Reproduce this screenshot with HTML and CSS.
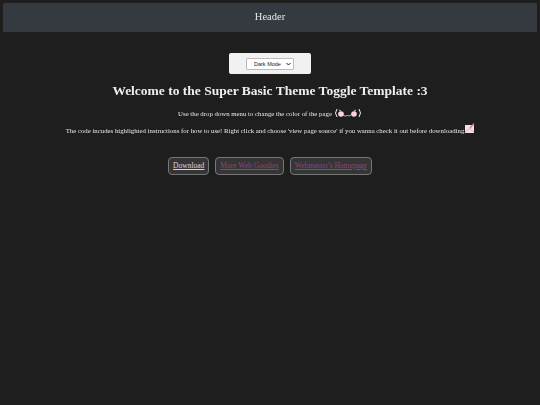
FILE: index.html
```html
<!DOCTYPE html>
<html>
<head>
<meta charset="UTF-8">
<title>Theme Toggle Template</title>
<link rel="stylesheet" href="styles.css">
</head>
<body>
<header class="site-header">Header</header>
<main class="content">
  <div class="theme-box">
    <select class="theme-select">
      <option>Dark Mode</option>
      <option>Light Mode</option>
    </select>
  </div>
  <h1>Welcome to the Super Basic Theme Toggle Template :3</h1>
  <p class="line-one">Use the drop down menu to change the color of the page
    <svg class="face" width="28" height="12" viewBox="0 0 28 12">
      <path d="M3 1 Q0 5 3 9 M25 1 Q28 5 25 9" fill="none" stroke="#eee" stroke-width="1"/>
      <path d="M9 7 Q11 9 13.5 7.5 Q16 9 18 6" fill="none" stroke="#ddd" stroke-width="0.8"/>
      <circle cx="7" cy="6" r="2.8" fill="#fbd5d8"/>
      <circle cx="20" cy="6" r="2.8" fill="#fbd5d8"/>
      <path d="M5 2 L7 3 M20 3 L22 2" stroke="#eee" stroke-width="0.8"/>
    </svg>
  </p>
  <p class="line-two">The code incudes highlighted instructions for how to use! Right click and choose 'view page source' if you wanna check it out before downloading
    <svg class="note" width="9" height="10" viewBox="0 0 9 10">
      <rect x="0" y="2" width="9" height="8" fill="#f6dfe2"/>
      <path d="M0 9 L4.5 5.5 L9 9" fill="none" stroke="#b9a0a4" stroke-width="0.7"/>
      <path d="M5 5 L9 0.5" stroke="#d9778a" stroke-width="1.3"/>
    </svg>
  </p>
  <nav class="button-row">
    <a class="btn btn-first" href="#">Download</a>
    <a class="btn" href="#">More Web Goodies</a>
    <a class="btn" href="#">Webmaster's Homepage</a>
  </nav>
</main>
</body>
</html>
```

FILE: styles.css
```css
body {
  margin: 0;
  padding: 3px;
  height: 405px;
  box-sizing: border-box;
  background-color: #1e1e1e;
  color: #e8e8e8;
  font-family: "Liberation Serif", serif;
  overflow: hidden;
}

.site-header {
  height: 29px;
  line-height: 28px;
  background-color: #343a40;
  color: #e6e6e6;
  text-align: center;
  font-size: 10.5px;
  border-radius: 1px;
  filter: blur(0.3px);
}

.content {
  display: flex;
  flex-direction: column;
  align-items: center;
  padding-top: 21px;
  filter: blur(0.3px);
}

.theme-box {
  width: 82px;
  height: 21px;
  display: flex;
  align-items: center;
  justify-content: center;
  background-color: #f1f1f1;
  border-radius: 2px;
}

.theme-select {
  appearance: none;
  width: 48px;
  height: 12px;
  padding: 0 0 0 7px;
  font-family: "Liberation Sans", sans-serif;
  font-size: 5.5px;
  color: #222;
  background: #fff url("data:image/svg+xml,%3Csvg xmlns='http://www.w3.org/2000/svg' width='5' height='4'%3E%3Cpath d='M0.5 1 L2.5 3 L4.5 1' fill='none' stroke='%23222' stroke-width='1'/%3E%3C/svg%3E") no-repeat right 2px center;
  border: 1px solid #bbb;
  border-radius: 1px;
}

h1 {
  margin: 7px 0 0;
  font-size: 13.5px;
  line-height: 20px;
  color: #eee;
}

p {
  margin: 0;
  font-size: 6.8px;
  color: #e8e8e8;
}

.line-one {
  margin-top: 6px;
  display: flex;
  align-items: center;
  gap: 2px;
  height: 13px;
}

.line-two {
  margin-top: 3px;
  display: flex;
  align-items: center;
  gap: 1px;
  height: 14px;
}

.note {
  margin-top: -4px;
}

.button-row {
  display: flex;
  gap: 6px;
  margin-top: 20px;
}

.btn {
  height: 16px;
  line-height: 16px;
  padding: 0 4px;
  font-size: 7.5px;
  color: #8a4580;
  background-color: #353535;
  border: 1px solid #777;
  border-radius: 4px;
}

.btn-first {
  color: #e6cdd6;
}
```
